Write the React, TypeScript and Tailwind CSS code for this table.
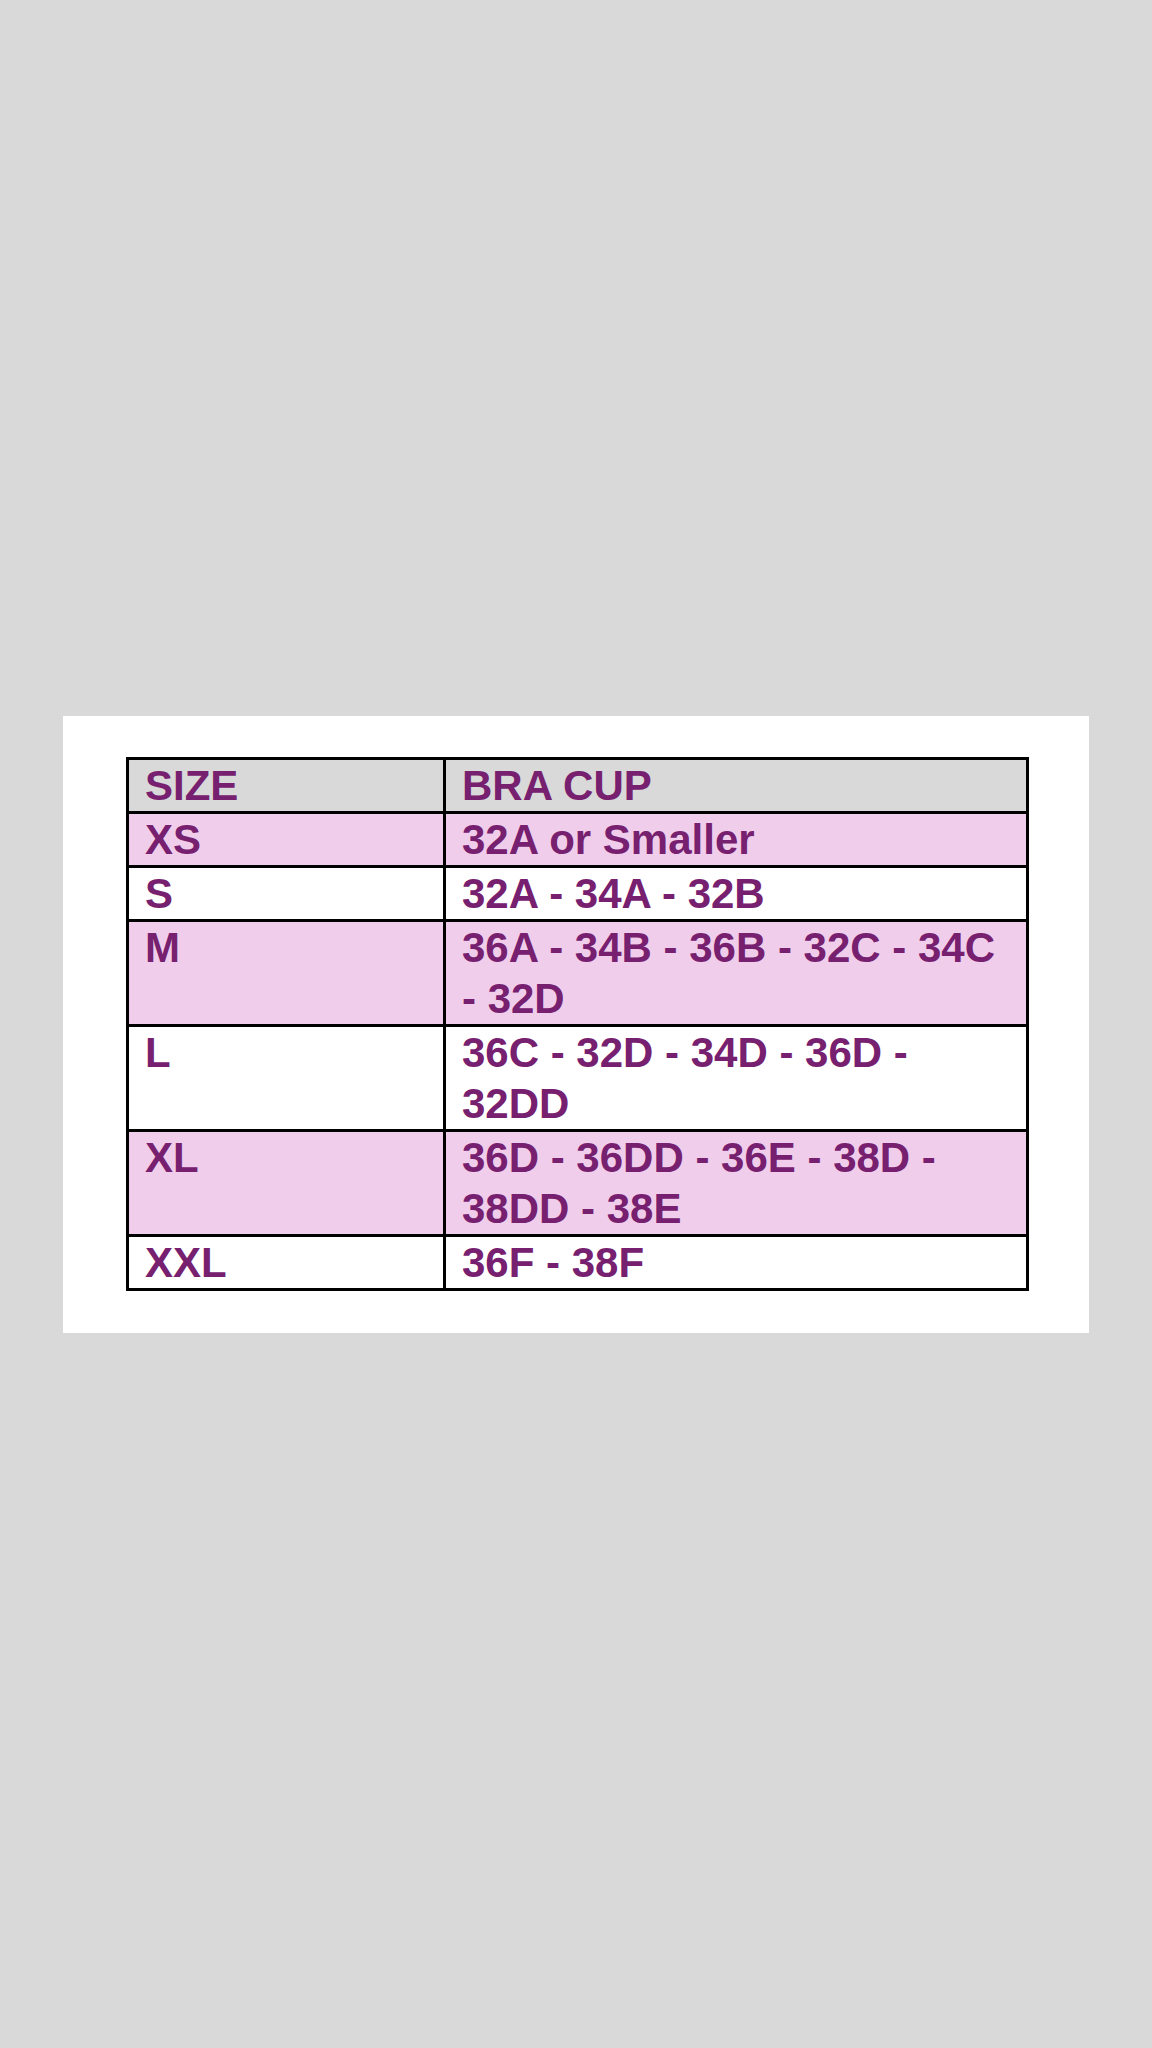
const rows = [
  { size: "XS", cup: "32A or Smaller", pink: true },
  { size: "S", cup: "32A - 34A - 32B", pink: false },
  { size: "M", cup: "36A - 34B - 36B - 32C - 34C - 32D", pink: true },
  { size: "L", cup: "36C - 32D - 34D - 36D - 32DD", pink: false },
  { size: "XL", cup: "36D - 36DD - 36E - 38D - 38DD - 38E", pink: true },
  { size: "XXL", cup: "36F - 38F", pink: false },
]

export default function App() {
  return (
    <div className="min-h-[2048px] w-full bg-[#d9d9d9] flex items-center justify-center">
      <div className="w-[1026px] h-[617px] bg-white pl-[63px] pt-[41px]">
        <table
          className="table-fixed border-collapse w-[900px] text-[42px] leading-[51px] font-bold text-[#77206f]"
          style={{ fontFamily: '"Liberation Sans", Arial, sans-serif' }}
        >
          <colgroup>
            <col className="w-[317px]" />
            <col className="w-[583px]" />
          </colgroup>
          <thead>
            <tr className="bg-[#d9d9d9]">
              <th className="border-[3px] border-black text-left align-top pl-4 font-bold">SIZE</th>
              <th className="border-[3px] border-black text-left align-top pl-4 pr-6 font-bold">BRA CUP</th>
            </tr>
          </thead>
          <tbody>
            {rows.map((r) => (
              <tr key={r.size} className={r.pink ? "bg-[#f0ceeb]" : "bg-white"}>
                <td className="border-[3px] border-black align-top pl-4">{r.size}</td>
                <td className="border-[3px] border-black align-top pl-4 pr-6">{r.cup}</td>
              </tr>
            ))}
          </tbody>
        </table>
      </div>
    </div>
  )
}
